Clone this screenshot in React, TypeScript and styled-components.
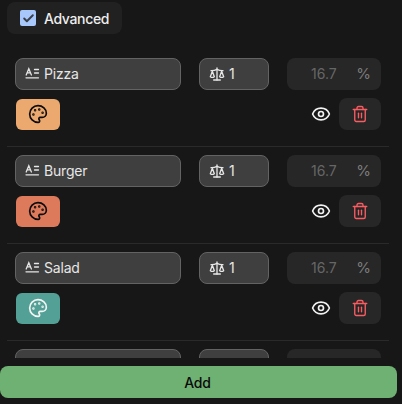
import React from "react";
import styled, { createGlobalStyle } from "styled-components";
import { Palette, Trash2, Eye, Scale, Check } from "lucide-react";

const Global = createGlobalStyle`
  html, body { margin: 0; padding: 0; background: #171717; }
  body { font-family: Inter, "Liberation Sans", sans-serif; overflow: hidden; }
`;

const Page = styled.div`
  width: 402px;
  height: 404px;
  display: flex;
  flex-direction: column;
  background: #171717;
  overflow: hidden;
`;

const Scroll = styled.div`
  height: 358px;
  flex: none;
  overflow: hidden;
  padding: 2px 13px 0 7px;
  box-sizing: border-box;
`;

const AdvancedBox = styled.label`
  width: 115px;
  height: 32px;
  box-sizing: border-box;
  display: flex;
  align-items: center;
  gap: 8px;
  padding-left: 13px;
  background: #212121;
  border-radius: 8px;
  color: #eeeeee;
  font-size: 14px;
  font-weight: 500;
  letter-spacing: -0.35px;
`;

const CheckMark = styled.span`
  width: 16px;
  height: 16px;
  border-radius: 2px;
  background: #a8c7fa;
  display: flex;
  align-items: center;
  justify-content: center;
  color: #3a3f48;
`;

const Item = styled.div`
  margin-top: 24px;
  padding: 0 8px 16px;
  border-bottom: 1px solid #2a2a2a;
  display: flex;
  flex-direction: column;
  gap: 8px;
  & + & { margin-top: 8px; }
`;

const Row = styled.div`
  display: flex;
  align-items: center;
`;

const Field = styled.div<{ $w: number }>`
  width: ${(p) => p.$w}px;
  height: 32px;
  box-sizing: border-box;
  flex: none;
  display: flex;
  align-items: center;
  gap: 4px;
  padding: 0 0 1px 9px;
  margin-right: 18px;
  background: #3f3f3f;
  border: 1px solid #636363;
  border-radius: 8px;
  color: #e6e6e6;
  font-size: 14px;
  letter-spacing: -0.2px;
`;

const Percent = styled.div`
  width: 94px;
  height: 32px;
  flex: none;
  box-sizing: border-box;
  display: flex;
  align-items: center;
  justify-content: space-between;
  padding: 0 10px 1px 24px;
  background: #272727;
  border-radius: 8px;
  color: #666666;
  font-size: 14px;
`;

const PercentSign = styled.span`
  color: #7b7b7b;
  font-size: 15px;
`;

const Swatch = styled.div<{ $color: string; $light?: boolean }>`
  width: 44px;
  height: 31px;
  margin-left: 1px;
  border-radius: 6px;
  background: ${(p) => p.$color};
  display: flex;
  align-items: center;
  justify-content: center;
  color: ${(p) => (p.$light ? "#f4f4f4" : "#0c0c0c")};
`;

const Spacer = styled.div`
  flex: 1;
`;

const EyeWrap = styled.span`
  display: flex;
  color: #f2f2f2;
  margin-right: 8px;
`;

const TrashButton = styled.div`
  width: 42px;
  height: 32px;
  border-radius: 8px;
  background: #272727;
  display: flex;
  align-items: center;
  justify-content: center;
  color: #fb5c62;
`;

const Footer = styled.div`
  flex: 1;
  padding: 8px 5px 6px 0;
  display: flex;
`;

const AddButton = styled.button`
  flex: 1;
  height: 32px;
  border: 0;
  border-radius: 8px;
  background: #6fb173;
  color: #0a0a0a;
  font-family: inherit;
  font-size: 14px;
  font-weight: 500;
  letter-spacing: -0.2px;
  padding: 0 2px 0 0;
`;

const LabelIcon = () => (
  <svg width="15" height="15" viewBox="0 0 15 15" fill="none" stroke="#e6e6e6" strokeWidth="1.3" strokeLinecap="round">
    <path d="M1.2 9 L3.8 2.8 L6.4 9 M2.2 6.9 H5.4" />
    <path d="M9.5 3.5 H13.5 M9.5 7 H13.5 M1 11.8 H13.5" />
  </svg>
);

const items = [
  { name: "Pizza", color: "#eba96f" },
  { name: "Burger", color: "#dd7a5b" },
  { name: "Salad", color: "#53a096", light: true },
];

export default function App() {
  return (
    <Page>
      <Global />
      <Scroll>
        <AdvancedBox>
          <CheckMark>
            <Check size={13} strokeWidth={3.5} />
          </CheckMark>
          Advanced
        </AdvancedBox>
        {items.map((it) => (
          <Item key={it.name}>
            <Row>
              <Field $w={166}>
                <LabelIcon />
                {it.name}
              </Field>
              <Field $w={70}>
                <Scale size={16} strokeWidth={2} />
                1
              </Field>
              <Percent>
                16.7
                <PercentSign>%</PercentSign>
              </Percent>
            </Row>
            <Row>
              <Swatch $color={it.color} $light={it.light}>
                <Palette size={20} strokeWidth={2} />
              </Swatch>
              <Spacer />
              <EyeWrap>
                <Eye size={20} strokeWidth={2} />
              </EyeWrap>
              <TrashButton>
                <Trash2 size={18} strokeWidth={1.8} />
              </TrashButton>
            </Row>
          </Item>
        ))}
        <Item>
          <Row>
            <Field $w={166} />
            <Field $w={70} />
            <Percent />
          </Row>
        </Item>
      </Scroll>
      <Footer>
        <AddButton>Add</AddButton>
      </Footer>
    </Page>
  );
}
